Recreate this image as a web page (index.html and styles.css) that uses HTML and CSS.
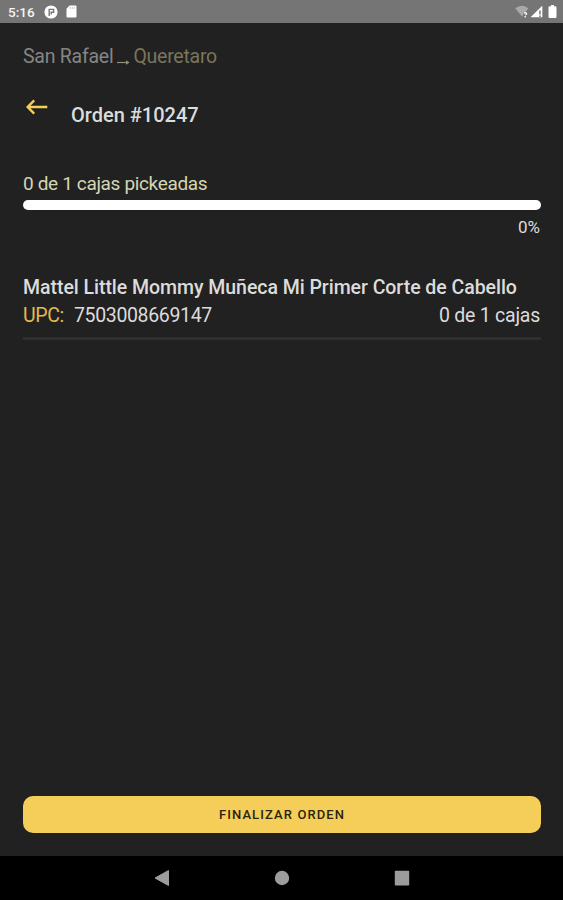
FILE: index.html
```html
<!DOCTYPE html>
<html lang="es">
<head>
    <meta charset="UTF-8">
    <meta name="viewport" content="width=device-width, initial-scale=1.0">
    <title>Orden #10247</title>
    <link rel="stylesheet" href="styles.css">
</head>
<body>
    <div class="status-bar">
        <span class="clock">5:16</span>
        <svg class="app-icon" width="14" height="14" viewBox="0 0 14 14">
            <circle cx="7" cy="7" r="6.6" fill="#fff"/>
            <path d="M5.2 11V4.4H9.6V7.2H7.2V9.4" fill="none" stroke="#777" stroke-width="1.4"/>
        </svg>
        <svg class="sd-icon" width="11" height="13" viewBox="0 0 11 13">
            <path d="M3.6 .5H9.3Q10.5 .5 10.5 1.7V11.3Q10.5 12.5 9.3 12.5H1.7Q.5 12.5 .5 11.3V3.8Z" fill="#fff"/>
            <path d="M4.3 2v2M6.3 2v2M8.3 2v2" stroke="#bbb" stroke-width=".8"/>
        </svg>
        <div class="status-right">
            <svg width="14" height="13" viewBox="0 0 14 13">
                <path d="M.3 3.3Q7-2 13.4 3.3L7 11.4Z" fill="#a9a9a9"/>
                <path d="M8.3 7h4.2v5.3H8.3z" fill="#777"/>
                <path d="M8.9 8.4Q10.3 7 11.3 8.2T10.2 10M10.2 11v1.4" fill="none" stroke="#fff" stroke-width="1.3"/>
            </svg>
            <svg width="13" height="13" viewBox="0 0 13 13">
                <path d="M.5 12.3 12.3 .8V12.3Z" fill="#fff"/>
                <path d="M9.2 5.5h1.5v4H9.2zM9.2 10.5h1.5V12H9.2z" fill="#777"/>
            </svg>
            <svg class="battery" width="9" height="13" viewBox="0 0 9 13">
                <path d="M3 0H6V1.3H7.2Q8.5 1.3 8.5 2.5V11.7Q8.5 13 7.2 13H1.8Q.5 13 .5 11.7V2.5Q.5 1.3 1.8 1.3H3Z" fill="#fff"/>
            </svg>
        </div>
    </div>

    <div class="container">
        <div class="route">
            <span class="origin">San Rafael</span>
            <svg class="route-arrow" width="13" height="7" viewBox="0 0 13 7">
                <path d="M0 3.5H10" stroke="#918d79" stroke-width="1.2"/>
                <path d="M9 1.2 12.6 3.5 9 5.8Z" fill="#918d79"/>
            </svg>
            <span class="destination">Queretaro</span>
        </div>

        <div class="header">
            <svg class="back" width="22" height="16" viewBox="0 0 22 16">
                <path d="M21.3 8H2M8.2 1.4 1.6 8l6.6 6.6" fill="none" stroke="#f5ce5a" stroke-width="2.4"/>
            </svg>
            <h1>Orden #10247</h1>
        </div>

        <div class="progress-label"><span>0 de 1 cajas pickeadas</span></div>
        <div class="progress"></div>
        <div class="percent"><span>0%</span></div>

        <div class="item">
            <h2><span>Mattel Little Mommy Muñeca Mi Primer Corte de Cabello</span></h2>
            <div class="item-row">
                <span class="upc-label">UPC:</span>
                <span class="upc">7503008669147</span>
                <span class="qty">0 de 1 cajas</span>
            </div>
        </div>

        <button type="button">FINALIZAR ORDEN</button>
    </div>

    <div class="nav-bar">
        <svg width="16" height="18" viewBox="0 0 16 18">
            <path d="M14.5 1.5V16.5L1 9Z" fill="#9c9c9c" stroke="#9c9c9c" stroke-linejoin="round"/>
        </svg>
        <svg width="16" height="16" viewBox="0 0 16 16">
            <circle cx="8" cy="8" r="7.2" fill="#9c9c9c"/>
        </svg>
        <svg width="16" height="16" viewBox="0 0 16 16">
            <rect x=".8" y=".8" width="14.4" height="14.6" rx=".6" fill="#9c9c9c"/>
        </svg>
    </div>
</body>
</html>
```
FILE: styles.css
```css
body {
    font-family: Roboto, sans-serif;
    margin: 0;
    height: 900px;
    display: flex;
    flex-direction: column;
    background-color: #212121;
    color: #dcdcdc;
    overflow: hidden;
}
.status-bar {
    display: flex;
    align-items: center;
    height: 23px;
    padding: 0 6px 0 8px;
    background-color: #757575;
    color: #f4f4f4;
    box-sizing: border-box;
}
.clock {
    width: 36px;
    font-size: 13.5px;
    font-weight: 500;
}
.sd-icon {
    margin-left: 8px;
}
.status-right {
    display: flex;
    align-items: center;
    gap: 1px;
    margin-left: auto;
}
.battery {
    margin-left: 4px;
}
.container {
    flex: 1;
    display: flex;
    flex-direction: column;
    padding: 22px 22px 23px 23px;
}
.route {
    display: flex;
    height: 24px;
    line-height: 24px;
    font-size: 19.5px;
    letter-spacing: -0.25px;
}
.origin {
    color: #858585;
}
.route-arrow {
    margin: 14px 3px 0 4px;
}
.destination {
    color: #79765c;
}
.header {
    display: flex;
    height: 30px;
    margin-top: 30px;
}
.back {
    margin: 0 23px 0 3px;
}
h1 {
    margin: 4px 0 0;
    font-size: 20px;
    line-height: 24px;
    font-weight: 500;
}
.progress-label {
    margin-top: 43px;
    font-size: 19px;
    line-height: 24px;
    letter-spacing: -0.35px;
    color: #d6d5b2;
}
.progress {
    height: 10px;
    margin-top: 4px;
    border-radius: 5px;
    background-color: #fff;
}
.percent {
    margin-top: 6px;
    padding-right: 1px;
    font-size: 17px;
    line-height: 22px;
    text-align: right;
}
.item {
    margin-top: 36px;
    padding-bottom: 7px;
    border-bottom: 3px solid #2f2f2f;
}
h2 {
    margin: 0;
    font-size: 19.5px;
    line-height: 28px;
    font-weight: 500;
    letter-spacing: -0.04px;
    white-space: nowrap;
}
.item-row {
    display: flex;
    padding-right: 1px;
    font-size: 19.5px;
    line-height: 28px;
    letter-spacing: -0.35px;
}
.upc-label {
    margin-right: 10px;
    color: #e3b94c;
}
.qty {
    margin-left: auto;
    letter-spacing: -0.25px;
}
button {
    height: 37px;
    margin-top: auto;
    border: none;
    border-radius: 10px;
    background-color: #f5ce5a;
    color: #2b2410;
    font-family: inherit;
    font-size: 13px;
    font-weight: 500;
    letter-spacing: 1.1px;
}
.nav-bar {
    display: flex;
    align-items: center;
    justify-content: center;
    gap: 104px;
    height: 44px;
    background-color: #000;
}
```
